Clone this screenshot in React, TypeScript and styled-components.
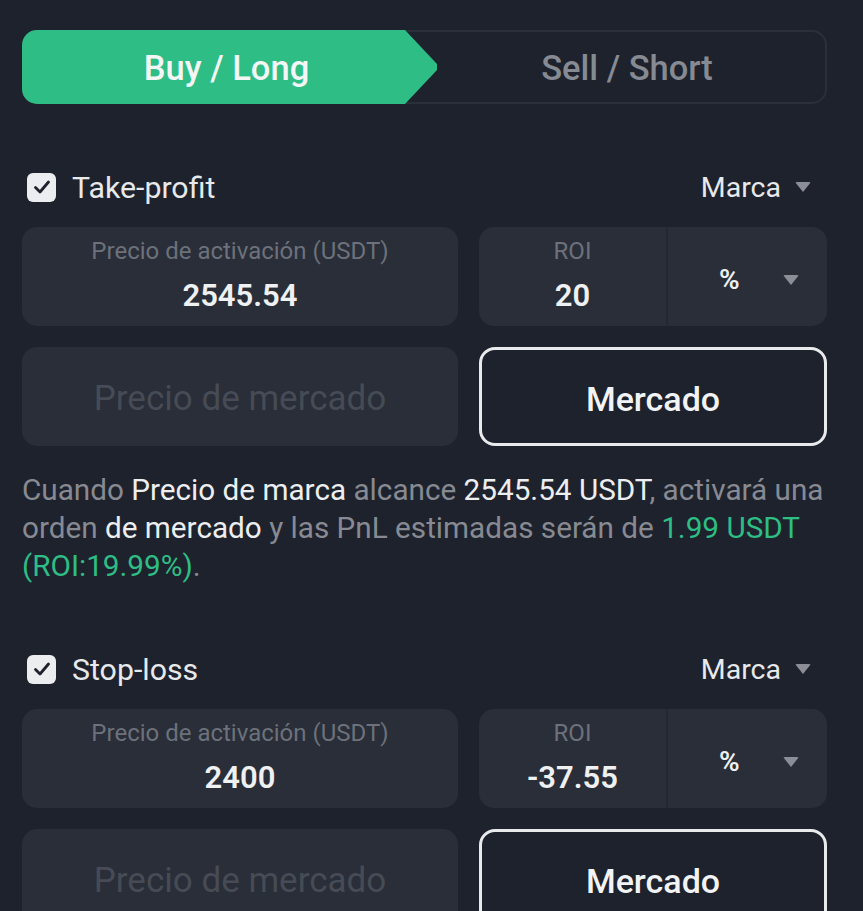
import React from "react";
import styled, { createGlobalStyle } from "styled-components";

const Global = createGlobalStyle`
  html, body { margin: 0; padding: 0; background: #1e222c; }
  body { font-family: Roboto, "Noto Sans", "Liberation Sans", sans-serif; }
  * { box-sizing: border-box; }
`;

const Page = styled.div`
  width: 863px;
  min-height: 911px;
  background: #1e222c;
  padding: 30px 36px 0 22px;
  overflow: hidden;
`;

const Tabs = styled.div`
  position: relative;
  display: grid;
  grid-template-columns: 405px 1fr;
  height: 74px;
  border: 2px solid #2b2f39;
  border-radius: 15px;
`;

const BuyTab = styled.div`
  position: absolute;
  left: -2px;
  top: -2px;
  bottom: -2px;
  width: 417px;
  background: #2ebd85;
  border-radius: 15px 0 0 15px;
  clip-path: polygon(0 0, 383px 0, 415px 46%, 415px 54%, 383px 100%, 0 100%);
`;

const TabLabel = styled.div<{ $active?: boolean }>`
  position: relative;
  display: flex;
  align-items: center;
  justify-content: center;
  font-size: 34.5px;
  font-weight: 500;
  padding-top: 2px;
  color: ${(p) => (p.$active ? "#f4f6f5" : "#868a93")};
`;

const Section = styled.div<{ $top: number }>`
  margin-top: ${(p) => p.$top}px;
`;

const HeaderRow = styled.div`
  display: flex;
  align-items: center;
  justify-content: space-between;
  height: 40px;
  padding-left: 5px;
  padding-right: 16px;
`;

const CheckLabel = styled.div`
  display: flex;
  align-items: center;
  gap: 16px;
  font-size: 30.3px;
  color: #e8e9eb;
`;

const CheckBox = styled.div`
  width: 29px;
  height: 29px;
  border-radius: 6px;
  background: #ecedef;
  display: flex;
  align-items: center;
  justify-content: center;
`;

const Dropdown = styled.div`
  display: flex;
  align-items: center;
  gap: 14px;
  font-size: 28.5px;
  color: #e8e9eb;
`;

const Caret = styled.span<{ $color?: string }>`
  display: inline-block;
  width: 0;
  height: 0;
  border-left: 8px solid transparent;
  border-right: 8px solid transparent;
  border-top: 10px solid ${(p) => p.$color || "#8b8e96"};
  border-radius: 2px;
`;

const Grid = styled.div`
  display: grid;
  grid-template-columns: 436fr 348fr;
  column-gap: 21px;
  row-gap: 21px;
  margin-top: 20px;
`;

const Field = styled.div`
  height: 99px;
  border-radius: 15px;
  background: #292e38;
  display: flex;
  flex-direction: column;
  align-items: center;
  justify-content: flex-start;
  padding-top: 10px;
`;

const FieldLabel = styled.div`
  font-size: 24px;
  color: #6c717b;
  line-height: 28px;
`;

const FieldValue = styled.div`
  font-size: 31px;
  font-weight: 600;
  color: #eef0f2;
  line-height: 38px;
  margin-top: 12px;
`;

const RoiField = styled.div`
  height: 99px;
  border-radius: 15px;
  background: #292e38;
  display: grid;
  grid-template-columns: 189px 1fr;
  align-items: stretch;
`;

const RoiPart = styled.div`
  display: flex;
  flex-direction: column;
  align-items: center;
  justify-content: flex-start;
  padding-top: 10px;
  border-right: 2px solid #242831;
`;

const UnitPart = styled.div`
  display: flex;
  align-items: center;
  justify-content: space-between;
  padding: 6px 28px 0 51px;
  font-size: 28px;
  font-weight: 600;
  color: #eef0f2;
`;

const Disabled = styled.div`
  height: 99px;
  border-radius: 15px;
  background: #292e38;
  display: flex;
  align-items: center;
  justify-content: center;
  font-size: 35px;
  padding-top: 4px;
  color: #464b55;
`;

const OutlineButton = styled.div`
  height: 99px;
  border-radius: 16px;
  border: 3px solid #e9eaec;
  display: flex;
  align-items: center;
  justify-content: center;
  font-size: 34px;
  font-weight: 500;
  padding-top: 4px;
  color: #f2f3f5;
`;

const Desc = styled.p`
  margin: 25px -14px 0 0;
  font-size: 29.7px;
  line-height: 38px;
  color: #878a92;
`;

const Hl = styled.span<{ $green?: boolean }>`
  color: ${(p) => (p.$green ? "#2ebd85" : "#eceef0")};
  white-space: nowrap;
`;

const Check = () => (
  <CheckBox>
    <svg width="20" height="20" viewBox="0 0 20 20">
      <path d="M3.5 10.5 L8 15 L16.5 5" fill="none" stroke="#1e222c" strokeWidth="2.8" strokeLinecap="round" strokeLinejoin="round" />
    </svg>
  </CheckBox>
);

const Block = ({ title, price, roi, top, children }: { title: string; price: string; roi: string; top: number; children?: React.ReactNode }) => (
  <Section $top={top}>
    <HeaderRow>
      <CheckLabel>
        <Check />
        {title}
      </CheckLabel>
      <Dropdown>
        Marca
        <Caret />
      </Dropdown>
    </HeaderRow>
    <Grid>
      <Field>
        <FieldLabel>Precio de activación (USDT)</FieldLabel>
        <FieldValue>{price}</FieldValue>
      </Field>
      <RoiField>
        <RoiPart>
          <FieldLabel>ROI</FieldLabel>
          <FieldValue>{roi}</FieldValue>
        </RoiPart>
        <UnitPart>
          %
          <Caret />
        </UnitPart>
      </RoiField>
      <Disabled>Precio de mercado</Disabled>
      <OutlineButton>Mercado</OutlineButton>
    </Grid>
    {children}
  </Section>
);

export default function App() {
  return (
    <>
      <Global />
      <Page>
        <Tabs>
          <BuyTab />
          <TabLabel $active>Buy / Long</TabLabel>
          <TabLabel>Sell / Short</TabLabel>
        </Tabs>
        <Block title="Take-profit" price="2545.54" roi="20" top={63}>
          <Desc>
            Cuando <Hl>Precio de marca</Hl> alcance <Hl>2545.54 USDT</Hl>, activará una orden{" "}
            <Hl>de mercado</Hl> y las PnL estimadas serán de <Hl $green>1.99 USDT</Hl>{" "}
            <Hl $green>(ROI:19.99%)</Hl>.
          </Desc>
        </Block>
        <Block title="Stop-loss" price="2400" roi="-37.55" top={64} />
      </Page>
    </>
  );
}
